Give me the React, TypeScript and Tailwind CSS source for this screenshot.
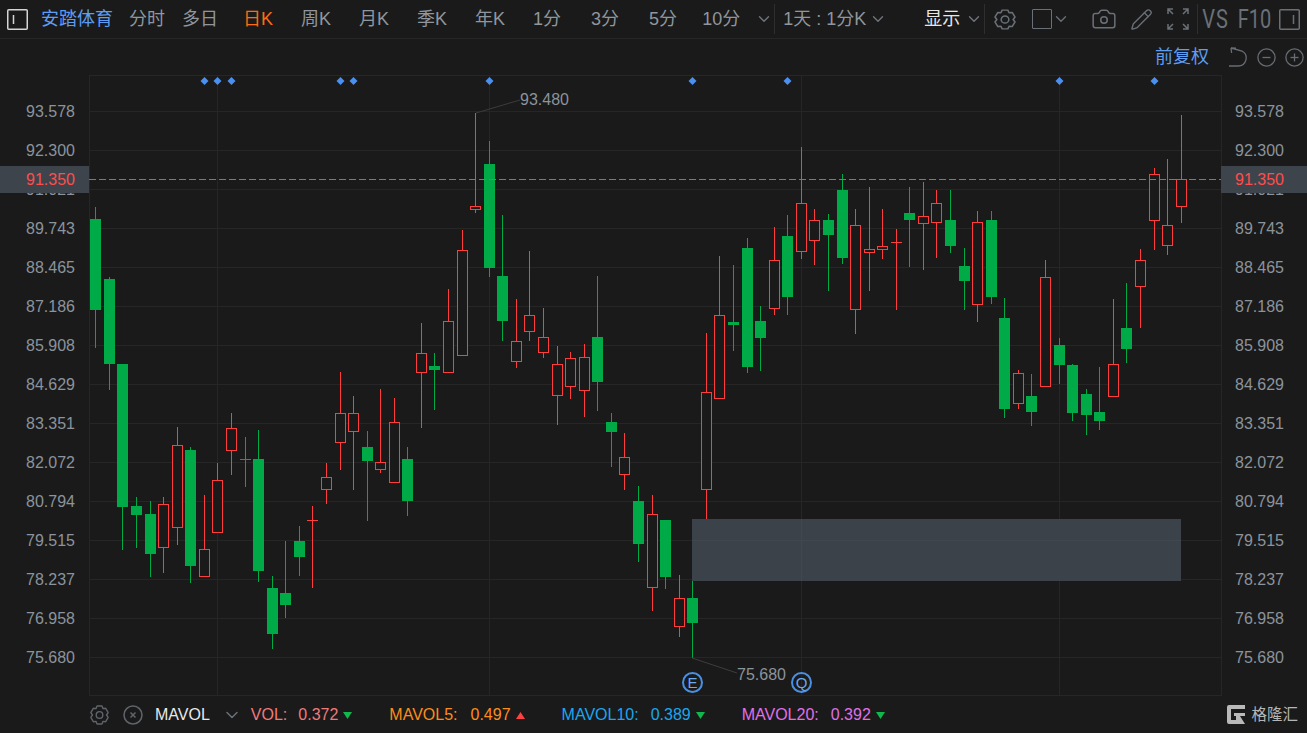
import React from 'react';
import { ChevronDown, Camera, Pencil } from 'lucide-react';

const FONT = "font-['Liberation_Sans','Noto_Sans_CJK_SC',sans-serif]";

// col, high, top, bottom, low, colour (pixel values read off the chart)
type Candle = [number, number, number, number, number, 'g' | 'r'];
const candles: Candle[] = [
  [95, 207, 219, 310, 348, 'g'], [109, 277, 279, 364, 390, 'g'], [122, 364, 364, 507, 550, 'g'],
  [136, 497, 506, 515, 548, 'g'], [150, 501, 514, 554, 577, 'g'], [163, 497, 504.5, 547, 573, 'r'],
  [177, 427, 445.5, 527.5, 545, 'r'], [190, 447, 450, 566, 583, 'g'], [204, 495, 549.5, 576.5, 576.5, 'r'],
  [217, 463, 480.5, 532.5, 532.5, 'r'], [231, 413, 428.5, 450.5, 475, 'r'], [245, 437, 459.5, 459.5, 487, 'g'],
  [258, 430, 459, 571, 582, 'g'], [272, 576, 588, 634, 649, 'g'], [285, 541, 593, 605, 618, 'g'],
  [299, 526, 541, 557, 576, 'g'], [312, 506, 520.5, 520.5, 588, 'r'], [326, 463, 477.5, 489.5, 504, 'r'],
  [340, 372, 413.5, 442.5, 470, 'r'], [353, 396, 413.5, 431.5, 490, 'r'], [367, 431, 447, 461, 521, 'g'],
  [380, 389, 462.5, 469.5, 472.5, 'r'], [394, 398, 422.5, 482.5, 482.5, 'r'], [407, 447, 459, 501, 516, 'g'],
  [421, 323, 353.5, 372.5, 428, 'r'], [434, 353, 366, 370, 410, 'g'], [448, 289, 321.5, 372.5, 372.5, 'r'],
  [462, 230, 250.5, 355.5, 355.5, 'r'], [475, 113, 206.5, 209.5, 213, 'r'], [489, 141, 164, 268, 277, 'g'],
  [502, 215, 276, 321, 341, 'g'], [516, 299, 341.5, 361.5, 368, 'r'], [529, 251, 315.5, 331.5, 341, 'r'],
  [543, 308, 337.5, 352.5, 358, 'r'], [557, 346, 364.5, 395.5, 425, 'r'], [570, 352, 358.5, 386.5, 399, 'r'],
  [584, 344, 357.5, 390.5, 417, 'r'], [597, 276, 337, 382, 411, 'g'], [611, 413, 422, 432, 467, 'g'],
  [624, 433, 457.5, 474.5, 490, 'r'], [638, 486, 501, 544, 562, 'g'], [652, 495, 514.5, 587.5, 611, 'r'],
  [665, 520, 520, 577, 589, 'g'], [679, 575, 598.5, 626.5, 637, 'r'], [692, 581, 598, 623, 658, 'g'],
  [706, 333, 392.5, 489.5, 519, 'r'], [719, 256, 315.5, 398.5, 399, 'r'], [733, 265, 322, 325, 351, 'g'],
  [747, 238, 248, 367, 373, 'g'], [760, 306, 321, 338, 371, 'g'], [774, 227, 260.5, 308.5, 315, 'r'],
  [787, 215, 236, 297, 315, 'g'], [801, 147, 203.5, 251.5, 259, 'r'], [814, 209, 220.5, 240.5, 265, 'r'],
  [828, 214, 220, 235, 291, 'g'], [842, 174, 190, 258, 264, 'g'], [855, 209, 225.5, 309.5, 334, 'r'],
  [869, 187, 249.5, 252.5, 291, 'r'], [882, 209, 246.5, 249.5, 259, 'r'], [896, 229, 242.5, 242.5, 310, 'r'],
  [909, 187, 213, 220, 267, 'g'], [923, 182, 216.5, 223.5, 270, 'r'], [936, 190, 203.5, 222.5, 258, 'r'],
  [950, 190, 220, 246, 253, 'g'], [964, 248, 266, 281, 310, 'g'], [977, 211, 222.5, 304.5, 322, 'r'],
  [991, 211, 220, 297, 304, 'g'], [1004, 298, 318, 409, 418, 'g'], [1018, 370, 373.5, 403.5, 409, 'r'],
  [1031, 374, 396, 412, 426, 'g'], [1045, 260, 277.5, 386.5, 386.5, 'r'], [1059, 338, 345, 365, 384, 'g'],
  [1072, 364, 365, 413, 421, 'g'], [1086, 389, 394, 415, 435, 'g'], [1099, 367, 412, 421, 430, 'g'],
  [1113, 299, 364.5, 396.5, 396.5, 'r'], [1126, 283, 328, 349, 363, 'g'], [1140, 249, 260.5, 286.5, 328, 'r'],
  [1154, 168, 174.5, 220.5, 250, 'r'], [1167, 159, 225.5, 245.5, 255, 'r'], [1181, 115, 179.5, 206.5, 223, 'r'],
];

const prices = ['93.578', '92.300', '91.021', '89.743', '88.465', '87.186', '85.908', '84.629', '83.351', '82.072', '80.794', '79.515', '78.237', '76.958', '75.680'];
const gridY = prices.map((_, i) => 111 + i * 39);
const gridX = [217.5, 489.5, 801.5, 1059.5];
const markers = [204, 217, 231, 340, 353, 489, 692, 787, 1059, 1154];

const RED = '#ff3d3d';
const GREEN = '#00ab47';

const GearIcon = ({ className }: { className?: string }) => (
  <svg viewBox="1.8 0.6 18.4 18.8" preserveAspectRatio="none" fill="none" stroke="currentColor" strokeWidth="1.3" className={className}>
    <path d="M8.6 1.6h4.8l1 2.4 2.6-.3 2.4 4.1-1.6 2.2 1.6 2.2-2.4 4.1-2.6-.3-1 2.4H8.6l-1-2.4-2.6.3-2.4-4.1L4.2 10 2.6 7.8 5 3.7l2.6.3z" strokeLinejoin="round" />
    <circle cx="11" cy="10" r="3.2" />
  </svg>
);

const Expand = ({ className }: { className?: string }) => (
  <svg viewBox="0 0 22 22" fill="none" stroke="currentColor" strokeWidth="1.5" className={className}>
    <path d="M1 6V1h5M1 1l5 5M21 6V1h-5M21 1l-5 5M1 16v5h5M1 21l5-5M21 16v5h-5M21 21l-5-5" />
  </svg>
);

const SideBox = ({ className }: { className?: string }) => (
  <svg viewBox="0 0 21 21" fill="none" stroke="currentColor" strokeWidth="1.5" className={className}>
    <rect x="0.75" y="0.75" width="19.5" height="19.5" rx="1" />
    <path d="M14.5 6v9" />
  </svg>
);

const Circled = ({ kind }: { kind: 'minus' | 'plus' }) => (
  <svg viewBox="0 0 19 19" fill="none" stroke="currentColor" strokeWidth="1.3" className="w-[19px] h-[19px] text-[#676d74]">
    <circle cx="9.5" cy="9.5" r="8.6" />
    <path d="M5.5 9.5h8" />
    {kind === 'plus' && <path d="M9.5 5.5v8" />}
  </svg>
);

const Tri = ({ up }: { up?: boolean }) => (
  <svg viewBox="0 0 9 7" className="w-[9px] h-[7px] mt-[2px]">
    <path d={up ? 'M4.5 0L9 7H0z' : 'M0 0h9L4.5 7z'} fill={up ? '#ff4040' : '#10b84c'} />
  </svg>
);

const Chevron = ({ className }: { className?: string }) => (
  <ChevronDown strokeWidth={1.8} className={className} />
);

const TopTab = ({ label, active, className }: { label: string; active?: boolean; className?: string }) => (
  <span className={`${active ? 'text-[#ff6a13]' : 'text-[#8f969e]'} ${className ?? ''}`}>{label}</span>
);

const Toolbar = () => (
  <div className="h-[39px] flex items-center shrink-0 border-b border-[#262626] text-[18px] leading-none">
    <SideBox className="w-[21px] h-[21px] ml-[7px] text-[#d5d5d5] scale-x-[-1]" />
    <span className="ml-[13px] text-[#5d9df2]">安踏体育</span>
    <TopTab label="分时" className="ml-[16px]" />
    <TopTab label="多日" className="ml-[17px]" />
    <TopTab label="日K" active className="ml-[25px]" />
    <TopTab label="周K" className="ml-[28px]" />
    <TopTab label="月K" className="ml-[28px]" />
    <TopTab label="季K" className="ml-[28px]" />
    <TopTab label="年K" className="ml-[28px]" />
    <TopTab label="1分" className="ml-[28px]" />
    <TopTab label="3分" className="ml-[30px]" />
    <TopTab label="5分" className="ml-[30px]" />
    <TopTab label="10分" className="ml-[25px]" />
    <Chevron className="w-[18px] h-[18px] ml-[15px] text-[#70767d]" />
    <div className="w-px h-[30px] bg-[#2e2e2e] ml-[1px]" />
    <span className="ml-[8px] text-[#8f969e]">1天 : 1分K</span>
    <Chevron className="w-[18px] h-[18px] ml-[3px] text-[#70767d]" />
    <span className="ml-[37px] text-[#e6e6e6]">显示</span>
    <Chevron className="w-[18px] h-[18px] ml-[5px] text-[#70767d]" />
    <div className="w-px h-[30px] bg-[#2e2e2e] ml-[1px]" />
    <GearIcon className="w-[22px] h-[21px] ml-[9px] text-[#6a7077]" />
    <div className="w-[20px] h-[20px] ml-[16px] border-[1.5px] border-[#6a7077] rounded-[1px]" />
    <Chevron className="w-[18px] h-[18px] text-[#6a7077]" />
    <Camera strokeWidth={1.4} className="w-[28px] h-[26px] ml-[20px] text-[#6a7077]" />
    <Pencil strokeWidth={1.4} className="w-[23px] h-[23px] ml-[12px] text-[#6a7077]" />
    <Expand className="w-[22px] h-[22px] ml-[14px] text-[#6a7077]" />
    <div className="w-px h-[30px] bg-[#2e2e2e] ml-[8px]" />
    <span className="ml-[4px] text-[#6a7077] text-[20px] font-['Roboto'] scale-y-125 tracking-[1px]">VS</span>
    <span className="ml-[9px] text-[#6a7077] text-[20px] font-['Roboto'] scale-y-125">F10</span>
    <SideBox className="w-[21px] h-[21px] ml-[8px] text-[#6a7077]" />
  </div>
);

const SubBar = () => (
  <div className="h-[36px] flex items-center justify-end shrink-0 pr-[3px]">
    <span className="text-[18px] text-[#5d9df2] mr-[19px]">前复权</span>
    <svg viewBox="0 0 20 20" fill="none" stroke="currentColor" strokeWidth="1.3" className="w-[20px] h-[20px] mr-[9px] text-[#676d74]">
      <path d="M1 19h9a8 8 0 0 0 4-15L3 1M3 1l.6 5M3 1l5 .2" />
    </svg>
    <Circled kind="minus" />
    <span className="w-[9px]" />
    <Circled kind="plus" />
  </div>
);

const LeftAxis = () => (
  <div className="relative w-[89px] pt-[17px] pr-[14px] text-right text-[16px] text-[#8b939c]">
    {prices.map(p => (
      <div key={p} className="h-[39px] leading-[39px]">{p}</div>
    ))}
    <div className="absolute top-[91px] left-0 right-0 h-[27px] leading-[27px] pr-[14px] bg-[#3e444b] text-[#ff4d4d]">91.350</div>
  </div>
);

const RightAxis = () => (
  <div className="relative w-[85px] pt-[17px] pl-[13px] text-[16px] text-[#8b939c]">
    {prices.map(p => (
      <div key={p} className="h-[39px] leading-[39px]">{p}</div>
    ))}
    <div className="absolute top-[91px] left-[-1px] right-0 h-[27px] leading-[27px] pl-[14px] bg-[#3e444b] text-[#ff4d4d]">91.350</div>
  </div>
);

const CandleMark = ({ c }: { c: Candle }) => {
  const [col, high, top, bottom, low, tone] = c;
  const x = col + 0.5;
  const color = tone === 'g' ? GREEN : RED;
  const doji = top === bottom;
  return (
    <g stroke={color} strokeWidth="1">
      {high < top && <line x1={x} x2={x} y1={high} y2={top} />}
      {low > bottom && <line x1={x} x2={x} y1={bottom} y2={low} />}
      {doji && <line x1={x - 5.5} x2={x + 5.5} y1={top} y2={top} />}
      {doji && <line x1={x} x2={x} y1={high} y2={low} />}
      {!doji && tone === 'g' && <rect x={x - 5.5} y={top} width={11} height={bottom - top} fill={GREEN} stroke="none" />}
      {!doji && tone === 'r' && <rect x={x - 5} y={top} width={10} height={bottom - top} fill="#1a1a1a" />}
    </g>
  );
};

const Plot = () => (
  <div className="relative flex-1 text-[16px] text-[#8b939c]">
    <svg viewBox="89 75 1133 621" className="absolute inset-0 w-full h-full" shapeRendering="crispEdges">
      <rect x="89.5" y="75.5" width="1132" height="620" fill="none" stroke="#262626" />
      {gridY.map(y => (
        <line key={y} x1="89" x2="1221" y1={y + 0.5} y2={y + 0.5} stroke="#262626" />
      ))}
      {gridX.map(x => (
        <line key={x} x1={x} x2={x} y1="75" y2="695" stroke="#262626" />
      ))}
      {candles.map(c => (
        <CandleMark key={c[0]} c={c} />
      ))}
      <line x1="89" x2="1221" y1="179.5" y2="179.5" stroke="#b8692e" strokeDasharray="7 3" />
      <rect x="692" y="519" width="489" height="62" fill="#3c4249" />
      <line x1="692" x2="1181" y1="540.5" y2="540.5" stroke="#41474e" />
      <line x1="801.5" x2="801.5" y1="519" y2="581" stroke="#41474e" />
      <g shapeRendering="auto" stroke="#3c3c3c" fill="none">
        <path d="M476 113L520 100" />
        <path d="M692 658L737 673" />
      </g>
      <g shapeRendering="auto" fill="#4a90f0">
        {markers.map(x => (
          <path key={x} d={`M${x + 0.5} 77l4 4-4 4-4-4z`} />
        ))}
      </g>
    </svg>
    <span className="absolute left-[431px] top-[13px]">93.480</span>
    <span className="absolute left-[648px] top-[588px]">75.680</span>
    <span className="absolute left-[593px] top-[597px] w-[21px] h-[21px] rounded-full border-2 border-[#4a90e2] text-[#6aa8f0] text-[15px] leading-[17px] text-center">E</span>
    <span className="absolute left-[702px] top-[597px] w-[21px] h-[21px] rounded-full border-2 border-[#4a90e2] text-[#6aa8f0] text-[15px] leading-[17px] text-center">Q</span>
  </div>
);

const Legend = () => (
  <div className="flex-1 flex items-center text-[16px] leading-none">
    <GearIcon className="w-[19px] h-[20px] ml-[90px] text-[#5f656c]" />
    <svg viewBox="0 0 20 20" fill="none" stroke="currentColor" strokeWidth="1.5" className="w-[20px] h-[20px] ml-[14px] text-[#5f656c]">
      <circle cx="10" cy="10" r="9" />
      <path d="M7.5 7.5l5 5M12.5 7.5l-5 5" />
    </svg>
    <span className="ml-[12px] text-[#e8e8e8]">MAVOL</span>
    <Chevron className="w-[20px] h-[20px] ml-[12px] text-[#6a7077]" />
    <span className="ml-[9px] text-[#f07a7a]">VOL:</span>
    <span className="ml-[11px] text-[#f07a7a]">0.372</span>
    <span className="ml-[5px]"><Tri /></span>
    <span className="ml-[37px] text-[#ff8c1a]">MAVOL5:</span>
    <span className="ml-[13px] text-[#ff8c1a]">0.497</span>
    <span className="ml-[5px]"><Tri up /></span>
    <span className="ml-[37px] text-[#1aa7ee]">MAVOL10:</span>
    <span className="ml-[12px] text-[#1aa7ee]">0.389</span>
    <span className="ml-[5px]"><Tri /></span>
    <span className="ml-[37px] text-[#e070e8]">MAVOL20:</span>
    <span className="ml-[12px] text-[#e070e8]">0.392</span>
    <span className="ml-[5px]"><Tri /></span>
    <svg viewBox="0 0 18 19" className="w-[18px] h-[19px] ml-auto" fill="#b9b9b9">
      <path d="M2 0h16v4H4v11h5v-4H7V8h11v11H2a2 2 0 0 1-2-2V2a2 2 0 0 1 2-2z" />
      <path d="M13 11h5v8z" fill="#1a1a1a" />
    </svg>
    <span className="ml-[6px] mr-[9px] text-[15.5px] text-[#b5b5b5]">格隆汇</span>
  </div>
);

export default function App() {
  return (
    <div className={`w-[1307px] h-[733px] flex flex-col overflow-hidden bg-[#1a1a1a] ${FONT}`}>
      <Toolbar />
      <SubBar />
      <div className="h-[621px] flex shrink-0">
        <LeftAxis />
        <Plot />
        <RightAxis />
      </div>
      <Legend />
    </div>
  );
}
